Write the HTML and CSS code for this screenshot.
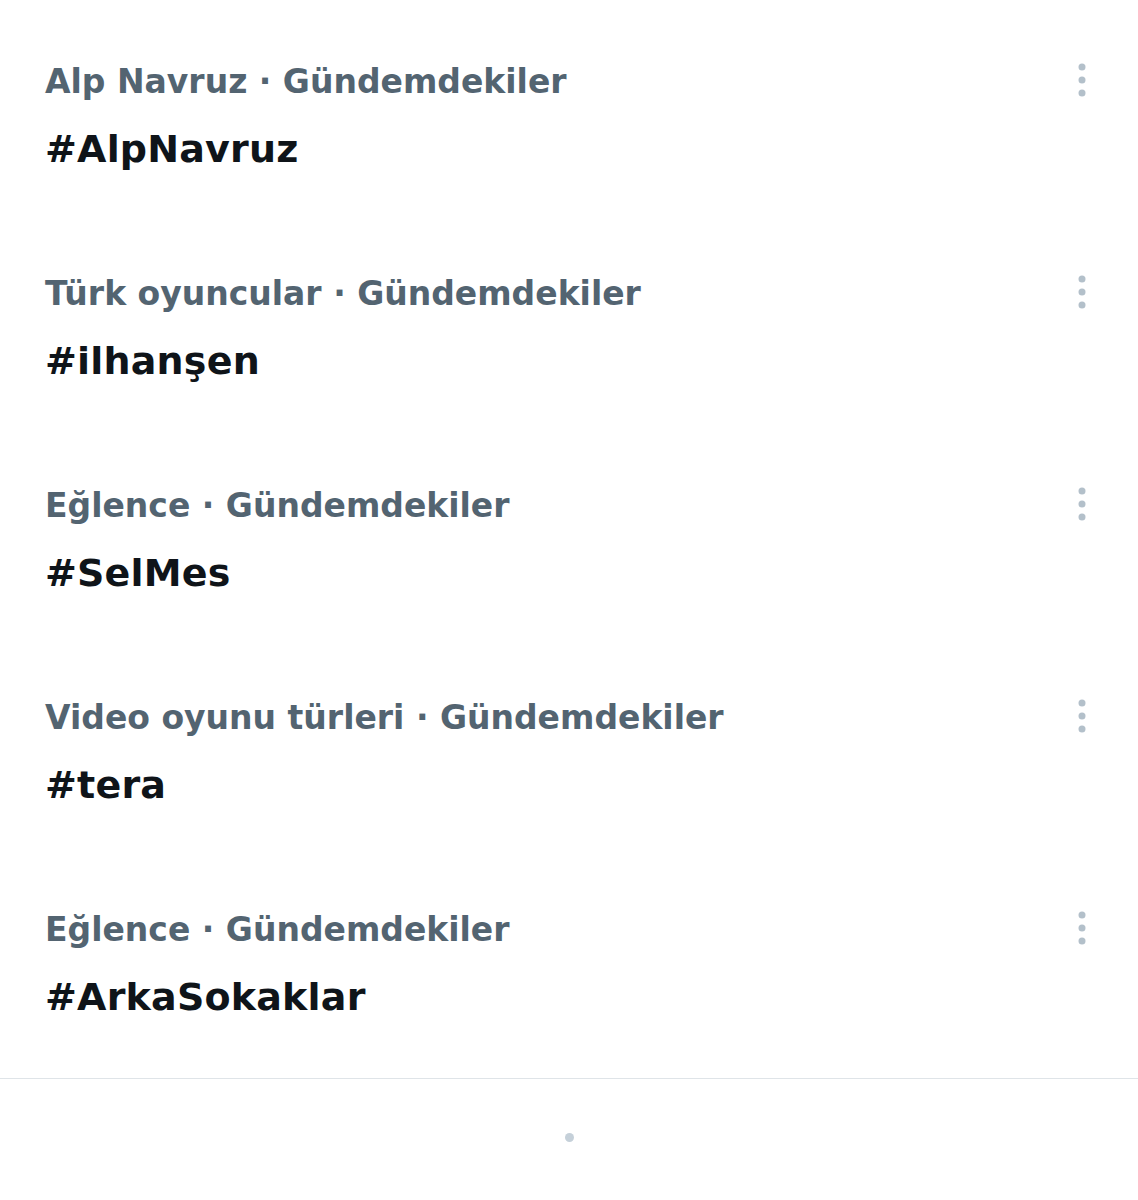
FILE: index.html
```html
<!DOCTYPE html>
<html lang="tr">
<head>
    <meta charset="UTF-8">
    <meta name="viewport" content="width=device-width, initial-scale=1.0">
    <title>Gündem</title>
    <link rel="stylesheet" href="styles.css">
</head>
<body>
    <div id="trends">
        <!-- Gündem listesi -->
        <div class="trend">
            <div class="trend-text">
                <div class="trend-meta">Alp Navruz · Gündemdekiler</div>
                <div class="trend-name">#AlpNavruz</div>
            </div>
            <svg class="more" viewBox="0 0 14 40"><circle cx="7" cy="5" r="3.5"/><circle cx="7" cy="18" r="3.5"/><circle cx="7" cy="31" r="3.5"/></svg>
        </div>
        <div class="trend">
            <div class="trend-text">
                <div class="trend-meta">Türk oyuncular · Gündemdekiler</div>
                <div class="trend-name">#ilhanşen</div>
            </div>
            <svg class="more" viewBox="0 0 14 40"><circle cx="7" cy="5" r="3.5"/><circle cx="7" cy="18" r="3.5"/><circle cx="7" cy="31" r="3.5"/></svg>
        </div>
        <div class="trend">
            <div class="trend-text">
                <div class="trend-meta">Eğlence · Gündemdekiler</div>
                <div class="trend-name">#SelMes</div>
            </div>
            <svg class="more" viewBox="0 0 14 40"><circle cx="7" cy="5" r="3.5"/><circle cx="7" cy="18" r="3.5"/><circle cx="7" cy="31" r="3.5"/></svg>
        </div>
        <div class="trend">
            <div class="trend-text">
                <div class="trend-meta">Video oyunu türleri · Gündemdekiler</div>
                <div class="trend-name">#tera</div>
            </div>
            <svg class="more" viewBox="0 0 14 40"><circle cx="7" cy="5" r="3.5"/><circle cx="7" cy="18" r="3.5"/><circle cx="7" cy="31" r="3.5"/></svg>
        </div>
        <div class="trend">
            <div class="trend-text">
                <div class="trend-meta">Eğlence · Gündemdekiler</div>
                <div class="trend-name">#ArkaSokaklar</div>
            </div>
            <svg class="more" viewBox="0 0 14 40"><circle cx="7" cy="5" r="3.5"/><circle cx="7" cy="18" r="3.5"/><circle cx="7" cy="31" r="3.5"/></svg>
        </div>
    </div>

    <!-- Yükleniyor göstergesi -->
    <div id="footer">
        <span class="loader"></span>
    </div>
</body>
</html>
```

FILE: styles.css
```css
body {
    margin: 0;
    background-color: #ffffff;
    font-family: "DejaVu Sans", Arial, sans-serif;
}
#trends {
    padding-bottom: 18px;
}
.trend {
    display: flex;
    justify-content: space-between;
    align-items: flex-start;
    height: 212px;
    box-sizing: border-box;
    padding: 62px 49px 0 45px;
}
.trend-meta {
    font-size: 33px;
    line-height: 40px;
    font-weight: 700;
    color: #536471;
}
.trend-name {
    margin-top: 25px;
    font-size: 38px;
    line-height: 44px;
    font-weight: 700;
    letter-spacing: 0.2px;
    color: #0f1419;
}
.more {
    width: 14px;
    height: 40px;
    fill: #b3c0ca;
}
#footer {
    border-top: 1px solid #dfe4e8;
    padding-top: 54px;
    height: 121px;
    box-sizing: border-box;
}
.loader {
    display: block;
    width: 9px;
    height: 9px;
    margin: 0 auto;
    border-radius: 50%;
    background: #c5d0d9;
}
```
